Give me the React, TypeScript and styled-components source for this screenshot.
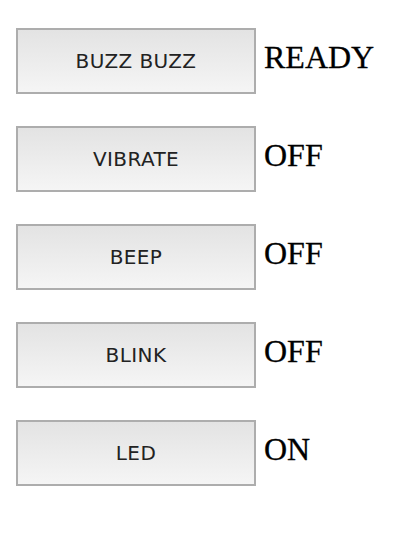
import React from 'react';
import styled, { createGlobalStyle } from 'styled-components';

const GlobalStyle = createGlobalStyle`
  html, body {
    margin: 0;
    padding: 0;
    background: #fff;
  }
`;

const controls = [
  { label: 'BUZZ BUZZ', status: 'READY' },
  { label: 'VIBRATE', status: 'OFF' },
  { label: 'BEEP', status: 'OFF' },
  { label: 'BLINK', status: 'OFF' },
  { label: 'LED', status: 'ON' },
];

const App = () => {
  return (
    <>
      <GlobalStyle />
      <Panel>
        {controls.map((c) => (
          <Row key={c.label}>
            <ControlButton type="button">{c.label}</ControlButton>
            <Status>{c.status}</Status>
          </Row>
        ))}
      </Panel>
    </>
  );
};

export default App;

const Panel = styled.div`
  display: flex;
  flex-direction: column;
  gap: 32px;
  padding: 28px 16px;
`;

const Row = styled.div`
  display: flex;
  align-items: baseline;
  gap: 8px;
`;

const ControlButton = styled.button`
  width: 240px;
  height: 66px;
  box-sizing: border-box;
  border: 2px solid #adadad;
  border-radius: 0;
  background: linear-gradient(to bottom, #e3e3e3, #f5f5f5);
  color: #222;
  font-family: 'DejaVu Sans', sans-serif;
  font-size: 20px;
  letter-spacing: 0.4px;
  padding: 0;
  cursor: pointer;
`;

const Status = styled.span`
  font-family: 'Liberation Serif', serif;
  font-size: 32px;
  color: #000;
  -webkit-text-stroke: 0.3px #000;
`;
